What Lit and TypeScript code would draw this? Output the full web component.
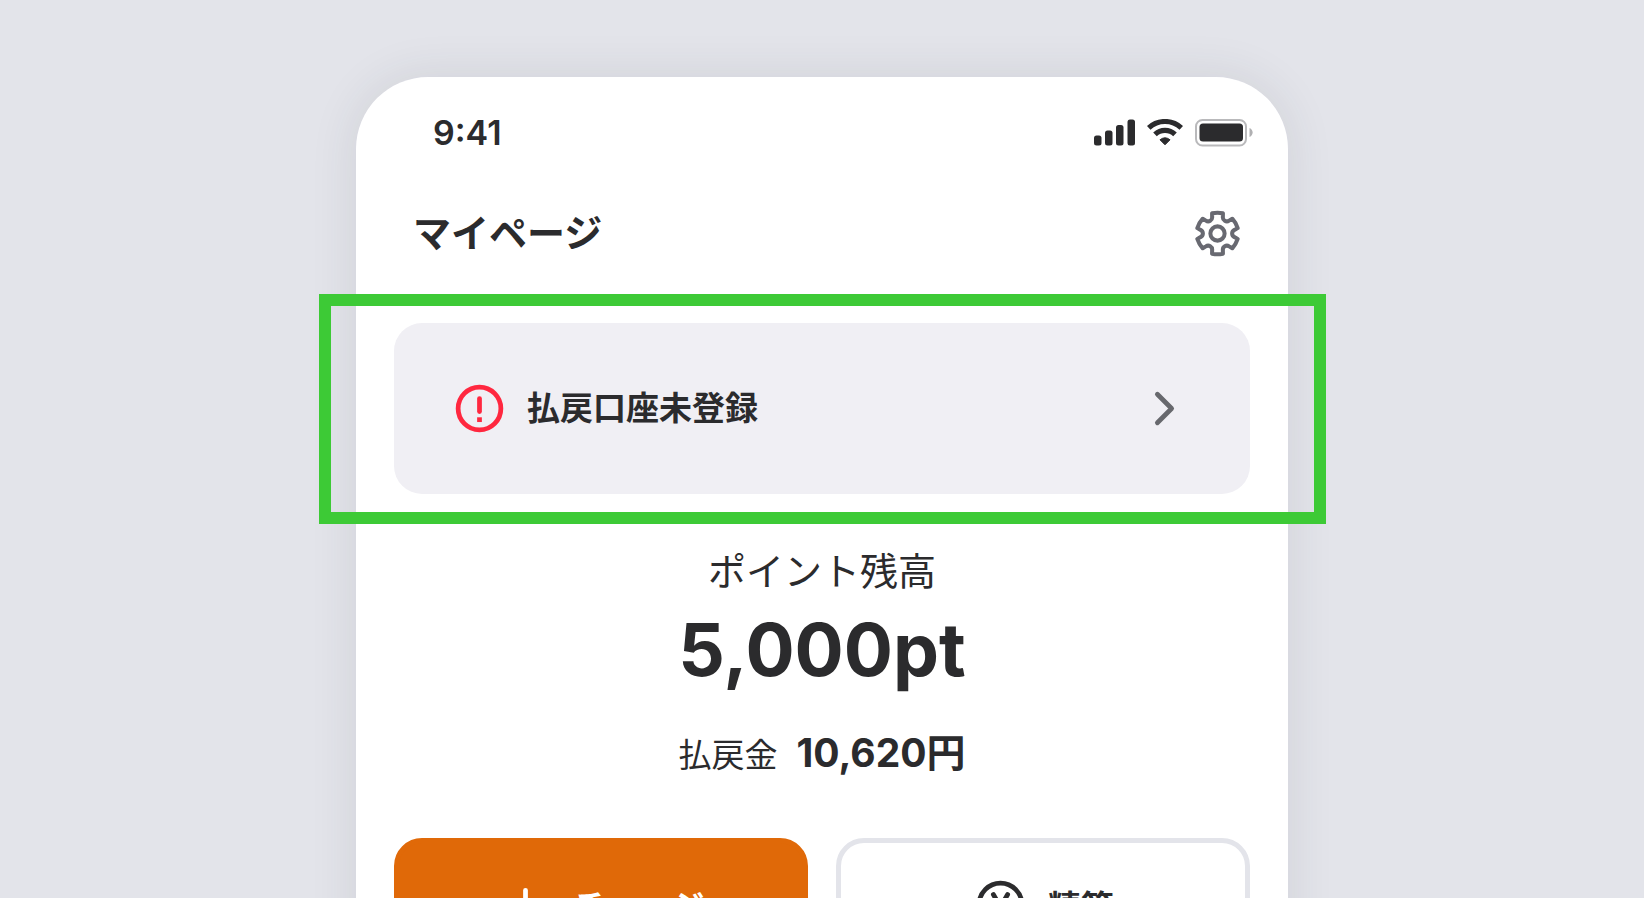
import { LitElement, html, css, svg } from "lit";
import { customElement } from "lit/decorators.js";

/** Point at `deg` degrees clockwise from the top, at radius `r` from the centre of a 24-unit box. */
const polar = (deg: number, r: number): string => {
  const a = (deg * Math.PI) / 180;
  return `${(12 + r * Math.sin(a)).toFixed(2)} ${(12 - r * Math.cos(a)).toFixed(2)}`;
};

/** Outline of a gear with six teeth and scooped valleys. */
const gearPath =
  [0, 60, 120, 180, 240, 300]
    .map(
      (t, i) =>
        `${i ? "L" : "M"}${polar(t - 15, 8.8)} Q${polar(t, 9)} ${polar(t + 15, 8.8)} ` +
        `L${polar(t + 18, 7.3)} C${polar(t + 21, 5.9)} ${polar(t + 39, 5.9)} ${polar(t + 42, 7.3)}`,
    )
    .join(" ") + "Z";

const gear = svg`<path d=${gearPath}/><circle cx="12" cy="12" r="3"/>`;

@customElement("app-root")
export class AppRoot extends LitElement {
  static styles = css`
    :host {
      display: block;
      height: 100vh;
      overflow: hidden;
      background: #e3e4ea;
      color: #2b2b2d;
      font-family: Inter, "Noto Sans CJK JP", sans-serif;
    }
    * { box-sizing: border-box; }
    svg { display: block; flex: none; fill: none; stroke: currentColor; stroke-linejoin: round; }
    button { font: inherit; color: inherit; background: none; border: 0; padding: 0; cursor: pointer; }
    h1, p { margin: 0; }
    .stage { display: flex; justify-content: center; padding: 77px 38px 0; }
    .phone {
      flex: 0 1 932px;
      min-width: 0;
      min-height: 100vh;
      background: #fff;
      border-radius: 72px 72px 0 0;
      box-shadow: 0 0 48px rgba(50, 54, 60, 0.11);
    }
    .status {
      display: flex;
      align-items: center;
      justify-content: space-between;
      padding: 36px 35px 0 77px;
    }
    .time { font-size: 34px; line-height: 40px; font-weight: 600; }
    .signals { display: flex; align-items: center; gap: 12px; }
    .signals svg { fill: currentColor; stroke: none; }
    .header {
      display: flex;
      align-items: center;
      justify-content: space-between;
      padding: 52px 42px 32px 57px;
    }
    h1 { font-size: 38px; line-height: 57px; font-weight: 700; }
    .settings { color: #686971; }
    .icon { width: 57px; height: 57px; }
    .highlight {
      margin: 0 -38px 0 -37px;
      border: 12px solid #3dca36;
      padding: 17px 64px 18px 63px;
    }
    .notice {
      display: flex;
      align-items: center;
      gap: 19px;
      width: 100%;
      padding: 57px;
      border-radius: 28px;
      background: #f0eff4;
      font-size: 33px;
      line-height: 57px;
      font-weight: 700;
      text-align: left;
    }
    .notice .label { flex: 1; }
    .alert { color: #ff273f; }
    .chevron { color: #67686d; }
    .balance { padding: 19px 38px 0; text-align: center; }
    .caption { font-size: 38px; line-height: 57px; }
    .points { font-size: 73px; line-height: 100px; font-weight: 700; }
    .refund {
      display: flex;
      align-items: baseline;
      justify-content: center;
      gap: 19px;
      padding-top: 24px;
      font-size: 33px;
      line-height: 57px;
    }
    .refund strong { font-size: 39px; font-weight: 700; }
    .actions { display: grid; grid-template-columns: 1fr 1fr; gap: 28px; padding: 54px 38px 0; }
    .action {
      display: flex;
      align-items: center;
      justify-content: center;
      gap: 19px;
      height: 133px;
      border: 5px solid #e3e4ea;
      border-radius: 28px;
      font-size: 33px;
      font-weight: 700;
    }
    .primary { background: #e06908; border-color: #e06908; color: #fff; }
  `;

  render() {
    return html`
      <div class="stage">
        <main class="phone">
          <div class="status">
            <span class="time">9:41</span>
            <div class="signals">
              <svg width="41" height="28" viewBox="0 0 41 28" aria-hidden="true">
                <rect x="0" y="16.500" width="7.500" height="10" rx="2.5"/>
                <rect x="11" y="11.500" width="7.500" height="15" rx="2.5"/>
                <rect x="22" y="6" width="7.500" height="20.500" rx="2.5"/>
                <rect x="33.500" y="0.500" width="7.500" height="26" rx="2.5"/>
              </svg>
              <svg width="36" height="28" viewBox="0 0 36 28" aria-hidden="true">
                <g fill="none" stroke="currentColor" stroke-width="5.200">
                  <path d="M1.700 8.900A24 24 0 0 1 34.300 8.900"/>
                  <path d="M8 15.400A14.500 14.500 0 0 1 28 15.400"/>
                </g>
                <path d="M13 20.800A8 8 0 0 1 23 20.800L18 25.800Z" stroke="currentColor" stroke-width="1"/>
              </svg>
              <svg width="58" height="28" viewBox="0 0 58 28" aria-hidden="true">
                <rect x="1" y="1" width="50" height="25.500" rx="6.500" fill="none" stroke="#b9b9bb" stroke-width="2"/>
                <rect x="4.500" y="4.500" width="43.500" height="18" rx="3.500"/>
                <path d="M54.500 9c4.200 1.800 4.200 7.200 0 9z" fill="#b0b0b2"/>
              </svg>
            </div>
          </div>
          <header class="header">
            <h1>マイページ</h1>
            <button class="settings" aria-label="設定">
              <svg class="icon" viewBox="0 0 24 24" stroke-width="1.700">${gear}</svg>
            </button>
          </header>
          <section class="highlight">
            <button class="notice">
              <svg class="icon alert" viewBox="0 0 24 24" stroke-width="2" aria-hidden="true">
                <circle cx="12" cy="12" r="9"/>
                <path d="M12 7.800v5.500" stroke-linecap="round"/>
                <path d="M12 15.700v2"/>
              </svg>
              <span class="label">払戻口座未登録</span>
              <svg class="icon chevron" viewBox="0 0 24 24" stroke-width="2" stroke-linecap="round" aria-hidden="true">
                <path d="M9 6l6 6-6 6"/>
              </svg>
            </button>
          </section>
          <section class="balance">
            <p class="caption">ポイント残高</p>
            <p class="points">5,000pt</p>
            <p class="refund"><span>払戻金</span><strong>10,620円</strong></p>
          </section>
          <div class="actions">
            <button class="action primary">
              <svg class="icon" viewBox="0 0 24 24" stroke-width="2" stroke-linecap="round" aria-hidden="true">
                <path d="M12 6v12M6 12h12"/>
              </svg>
              <span>チャージ</span>
            </button>
            <button class="action">
              <svg class="icon" viewBox="0 0 24 24" stroke-width="2" stroke-linecap="round" aria-hidden="true">
                <circle cx="12" cy="12" r="9"/>
                <path d="M9 7.800l3 5.200 3-5.200M12 13v4M9 13.500h6M9 16h6"/>
              </svg>
              <span>精算</span>
            </button>
          </div>
        </main>
      </div>
    `;
  }
}
